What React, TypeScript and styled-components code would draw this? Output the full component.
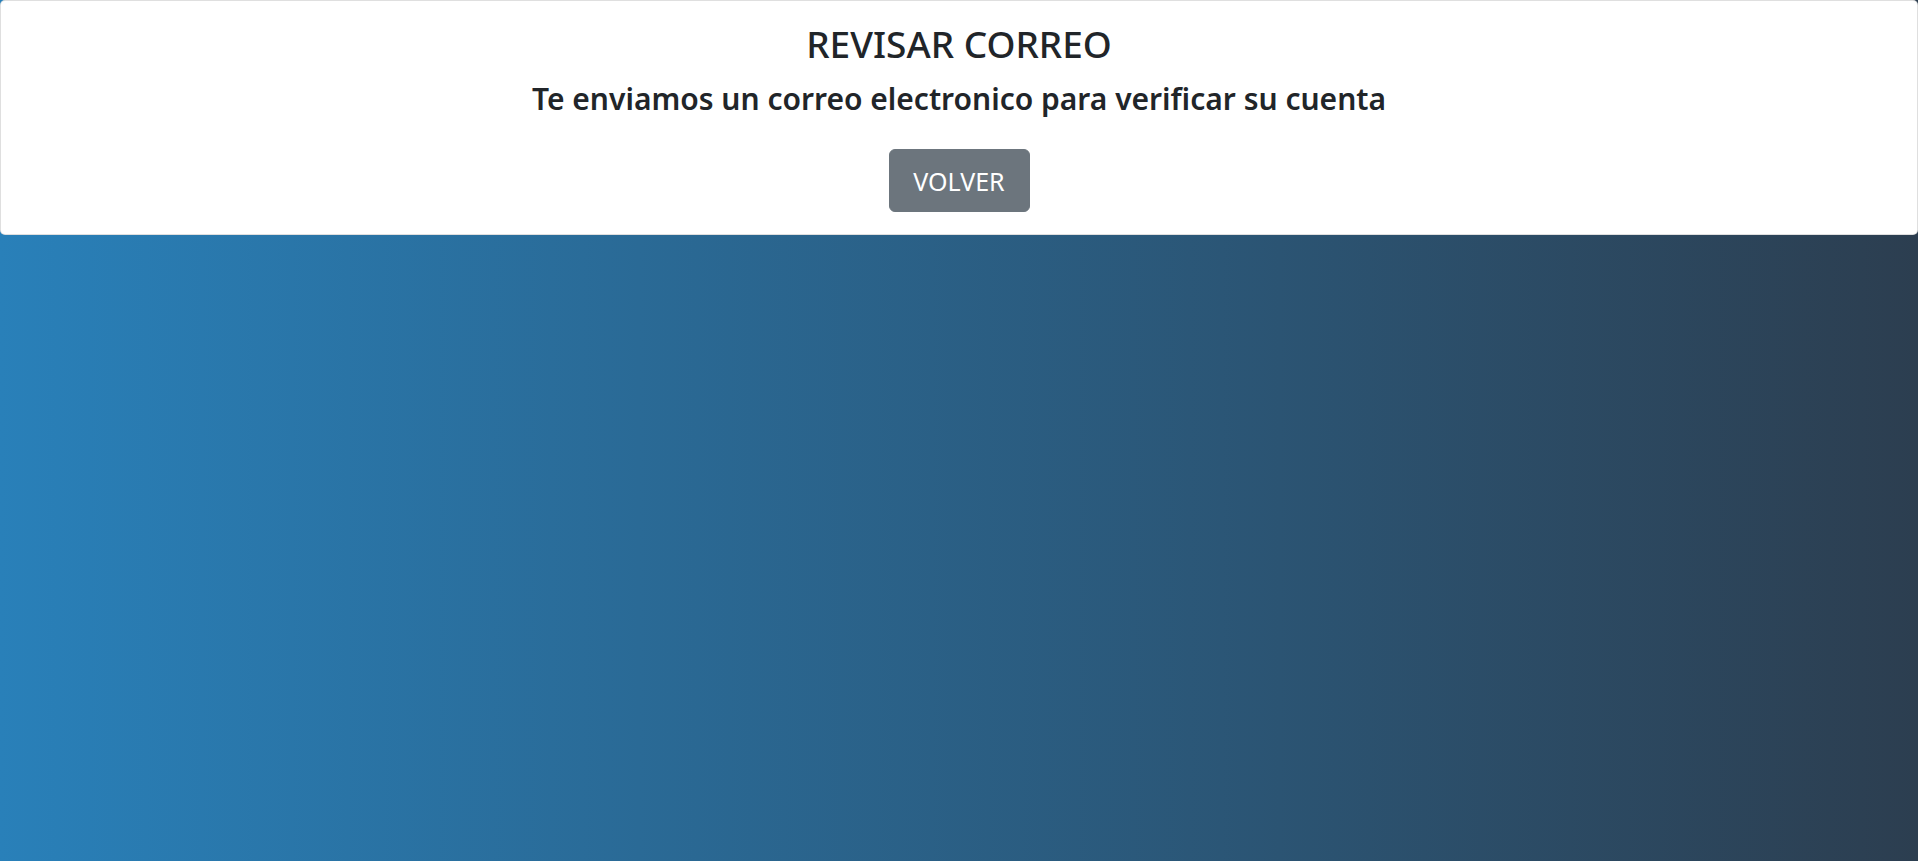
import React from 'react';
import styled, { createGlobalStyle } from 'styled-components';

const GlobalStyle = createGlobalStyle`
  html, body {
    margin: 0;
    padding: 0;
  }
  body {
    font-family: "Noto Sans", "Open Sans", sans-serif;
    color: #212529;
  }
`;

export const Page = styled.div`
  min-height: 100vh;
  background: linear-gradient(to right, #2980b9, #2c3e50);
`;

export const Card = styled.div`
  background: #fff;
  border: 1px solid rgba(0, 0, 0, 0.125);
  border-radius: 5px;
  height: 235px;
  box-sizing: border-box;
  padding: 19px 25px 22px;
  display: flex;
  flex-direction: column;
  align-items: center;
  text-align: center;
`;

export const Title = styled.h2`
  margin: 0;
  font-size: 37px;
  font-weight: 500;
  line-height: 48px;
`;

export const Subtitle = styled.h4`
  margin: 13px 0 0;
  font-size: 30px;
  font-weight: 600;
  line-height: 36px;
`;

export const Button = styled.button`
  margin-top: 32px;
  width: 141px;
  height: 64px;
  background: #6c757d;
  color: #fff;
  border: 1px solid #6c757d;
  border-radius: 6px;
  font-family: inherit;
  font-size: 25px;
  cursor: pointer;
`;

export default function App() {
  return (
    <>
      <GlobalStyle />
      <Page>
        <Card>
          <Title>REVISAR CORREO</Title>
          <Subtitle>Te enviamos un correo electronico para verificar su cuenta</Subtitle>
          <Button>VOLVER</Button>
        </Card>
      </Page>
    </>
  );
}
